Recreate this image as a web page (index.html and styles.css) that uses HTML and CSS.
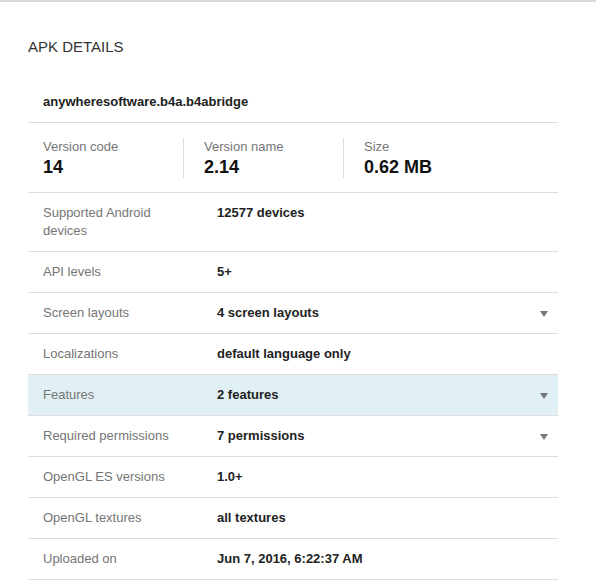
FILE: index.html
```html
<!DOCTYPE html>
<html>
<head>
<meta charset="utf-8">
<link rel="stylesheet" href="styles.css">
</head>
<body>
<div class="topbar"></div>
<section class="card">
  <h2 class="title">APK DETAILS</h2>
  <div class="pkg">anywheresoftware.b4a.b4abridge</div>
  <div class="metrics">
    <div class="metric">
      <div class="m-label">Version code</div>
      <div class="m-value">14</div>
    </div>
    <div class="metric">
      <div class="m-label">Version name</div>
      <div class="m-value">2.14</div>
    </div>
    <div class="metric">
      <div class="m-label">Size</div>
      <div class="m-value">0.62 MB</div>
    </div>
  </div>
  <div class="row">
    <div class="label">Supported Android<br>devices</div>
    <div class="value">12577 devices</div>
  </div>
  <div class="row">
    <div class="label">API levels</div>
    <div class="value">5+</div>
  </div>
  <div class="row">
    <div class="label">Screen layouts</div>
    <div class="value">4 screen layouts</div>
    <svg class="arrow" width="8" height="6" viewBox="0 0 8 6"><polygon points="0,0 8,0 4,6" fill="#777"/></svg>
  </div>
  <div class="row">
    <div class="label">Localizations</div>
    <div class="value">default language only</div>
  </div>
  <div class="row row-active">
    <div class="label">Features</div>
    <div class="value">2 features</div>
    <svg class="arrow" width="8" height="6" viewBox="0 0 8 6"><polygon points="0,0 8,0 4,6" fill="#777"/></svg>
  </div>
  <div class="row">
    <div class="label">Required permissions</div>
    <div class="value">7 permissions</div>
    <svg class="arrow" width="8" height="6" viewBox="0 0 8 6"><polygon points="0,0 8,0 4,6" fill="#777"/></svg>
  </div>
  <div class="row">
    <div class="label">OpenGL ES versions</div>
    <div class="value">1.0+</div>
  </div>
  <div class="row">
    <div class="label">OpenGL textures</div>
    <div class="value">all textures</div>
  </div>
  <div class="row">
    <div class="label">Uploaded on</div>
    <div class="value">Jun 7, 2016, 6:22:37 AM</div>
  </div>
</section>
</body>
</html>
```

FILE: styles.css
```css
html, body {
  margin: 0;
  padding: 0;
  background: #fff;
  font-family: "Liberation Sans", Arial, sans-serif;
  color: #222;
}
.topbar {
  height: 2px;
  background: #d9d9d9;
}
.card {
  width: 530px;
  margin: 0 0 0 28px;
  padding-top: 35px;
}
.title {
  margin: 0;
  font-size: 15px;
  line-height: 20px;
  font-weight: normal;
  color: #333;
  height: 56px;
}
.pkg {
  padding: 0 15px 11px;
  font-size: 13px;
  line-height: 18px;
  font-weight: bold;
  color: #222;
  border-bottom: 1px solid #ddd;
}
.metrics {
  display: flex;
  padding: 15px 15px 14px;
  border-bottom: 1px solid #ddd;
}
.metric {
  width: 160px;
  height: 40px;
  padding-left: 20px;
  border-left: 1px solid #e0e0e0;
  box-sizing: border-box;
}
.metric:first-child {
  width: 140px;
  padding-left: 0;
  border-left: none;
}
.m-label {
  font-size: 13px;
  line-height: 18px;
  color: #757575;
}
.m-value {
  font-size: 18px;
  line-height: 22px;
  font-weight: bold;
  color: #111;
}
.row {
  display: flex;
  align-items: flex-start;
  padding: 11px 10px 11px 15px;
  border-bottom: 1px solid #ddd;
  font-size: 13px;
  line-height: 18px;
}
.row-active {
  background: #e1f0f4;
}
.label {
  width: 174px;
  flex: none;
  color: #757575;
}
.value {
  flex: 1;
  font-weight: bold;
  color: #222;
}
.arrow {
  flex: none;
  margin-top: 7px;
}
```
